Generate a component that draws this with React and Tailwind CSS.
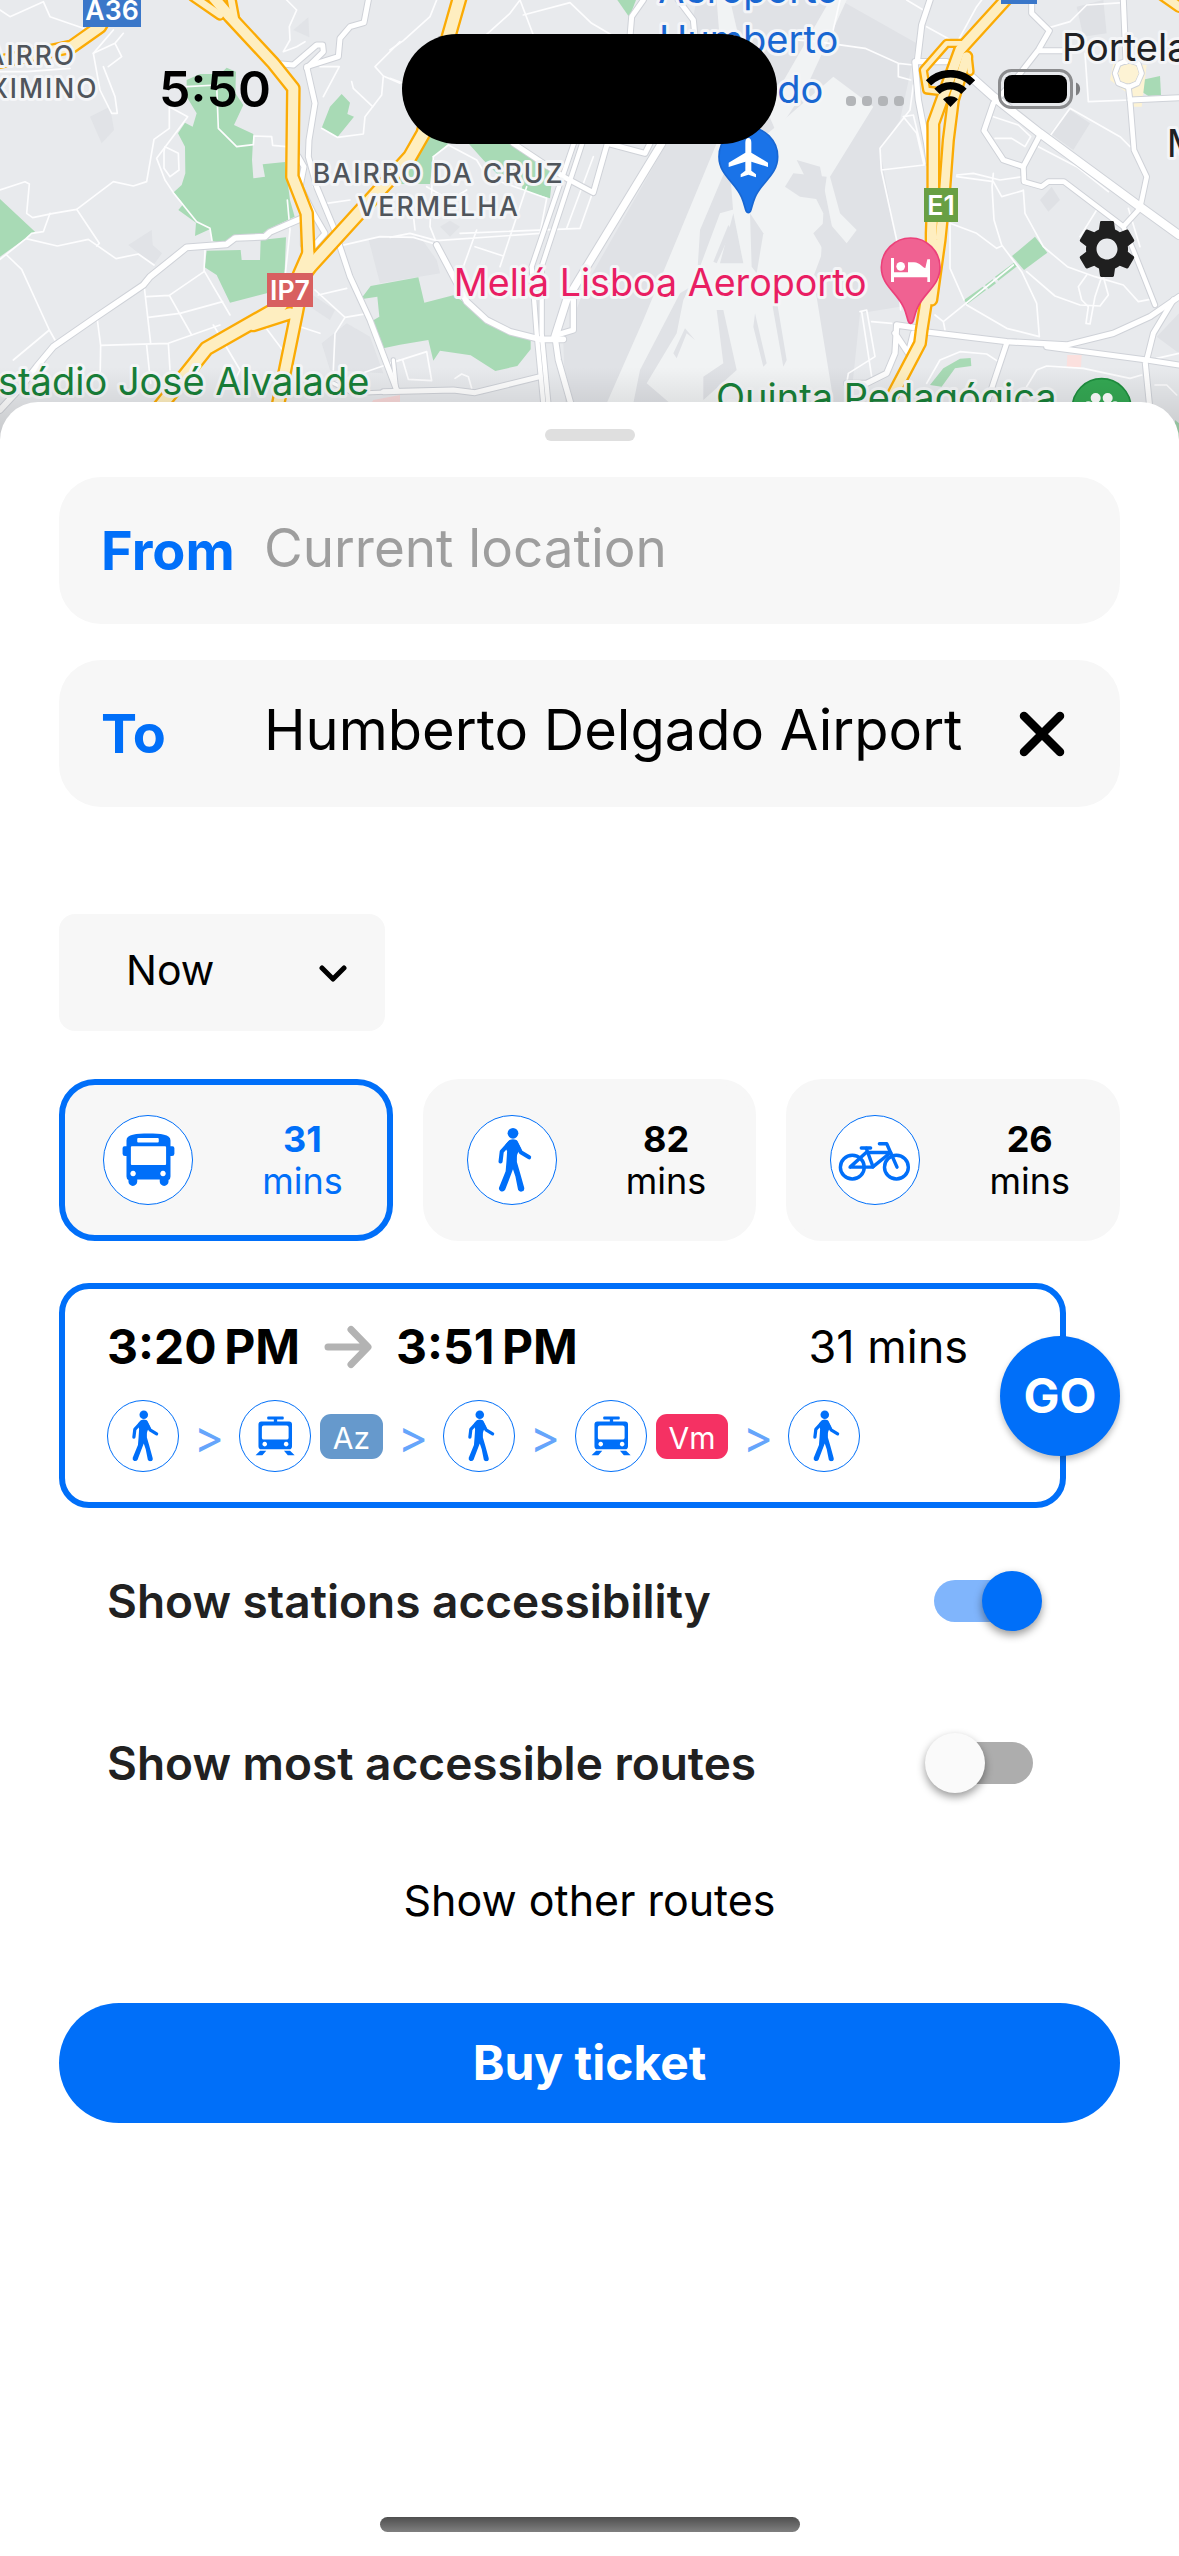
import React, { useState } from "react";
import { MdSettings } from "react-icons/md";

/* ---------- Map artwork ---------- */

const parks = [
  "M0 597 L105 695 L0 770Z",
  "M560 240 L600 222 L660 222 L680 203 L708 215 L706 280 L730 315 L702 375 L760 402 L756 480 L760 535 L795 530 L788 493 L855 486 L870 600 L884 650 L800 690 L775 712 L700 718 L680 735 L636 722 L631 687 L585 708 L588 668 L535 630 L550 612 L521 577 L545 555 L556 520 L555 440 L534 400 L555 368 L578 380 L590 340 L560 290Z",
  "M1025 282 L1050 308 L1042 342 L1062 350 L1012 412 L965 384 L990 320Z",
  "M620 752 L722 750 L725 780 L780 780 L782 720 L858 712 L852 860 L800 880 L690 908 L650 825 L614 802Z",
  "M1112 858 L1255 832 L1273 908 L1360 886 L1490 970 L1592 1020 L1592 1048 L1552 1098 L1486 1113 L1412 1066 L1320 1052 L1300 1082 L1285 1020 L1200 1034 L1150 1045 L1112 965 L1138 950 L1132 890 L1082 898Z",
  "M1280 395 L1345 432 L1300 470 L1290 552 L1170 552 L1220 480Z",
  "M1405 430 L1550 430 L1660 498 L1650 595 L1565 570 L1570 540 L1500 530 L1450 480Z",
  "M1852 0 L1908 0 L1888 52Z",
];

const parksEast = [
  "M765 710 L802 758 L732 810 L696 768Z",
  "M702 788 L712 798 L655 842 L645 830Z",
  "M638 838 L648 850 L625 867 L615 855Z",
  "M608 860 L618 870 L562 912 L552 900Z",
  "M450 1155 L490 1105 L540 1076 L572 1074 L574 1098 L525 1105 L485 1160Z",
  "M1085 240 L1140 228 L1143 285 L1105 288 L1085 275Z",
  "M1185 1260 L1197 1270 L1197 1320 L1185 1320Z",
];

const darkBlocks = [
  "M270 350 L330 320 L342 390 L305 430Z",
  "M385 735 L455 690 L458 735 L486 760 L460 795Z",
  "M880 90 L925 52 L928 112Z",
  "M1105 715 L1260 710 L1310 780 L1320 820 L1140 850Z",
  "M1040 970 L1110 1010 L1150 1120 L990 1110 L965 1030Z",
  "M1320 680 L1350 662 L1380 680 L1350 710Z",
  "M930 880 L1005 930 L990 960 L930 920Z",
];

const minorRoads = [
  "M0 570 L75 545 L88 552 L80 640 L98 653 L160 640 L230 628 L340 545 L400 558 L440 545 L462 418 L508 385 L508 320 L563 350 L545 375 L470 475 L495 540 L520 578 L590 665 L630 685 L636 722",
  "M20 765 L65 808 L148 990 L165 1020 M40 1080 L148 990 M0 778 L78 716 L95 700 L130 695 L150 640 M78 716 L172 738 L265 718 L348 776 L415 762 L462 795",
  "M230 628 L298 730 L290 738 M292 960 L302 1036 L505 1030 L660 975 M302 1036 L300 1150 M440 1036 L452 1150 M505 1030 L510 1110",
  "M433 862 L452 1030 M440 890 L508 886 L612 815 L615 752 M612 812 L690 945 M445 952 L540 940 L668 905 M508 886 L575 1005",
  "M0 30 L30 50 L130 5 L150 50 L250 85 M340 90 L280 160 L300 270 L335 340 L352 340 L345 290 L310 200",
  "M280 160 L345 130 L365 170 L325 200 M370 100 L345 130 M0 215 L80 215 L210 205",
  "M560 260 L650 255 L655 385 L710 440 L760 434 L762 408 L815 410 L818 436 L860 440",
  "M495 440 L535 460 L537 510 L510 530 L492 505 L492 455Z",
  "M860 0 L890 30 L868 80 L870 120 L850 155 M850 155 L890 140 L915 125",
  "M960 200 L1018 200 L970 290 M965 385 L1012 412 L1090 402 L1095 350 L1118 320 L1060 265 L1055 245",
  "M1118 320 L1145 285 L1150 228 L1200 250 M1150 228 L1125 200 L1200 125",
  "M862 600 L870 690 L855 830 M940 560 L980 610 L1050 600 M1010 740 L1140 710 L1240 712 L1315 735",
  "M945 870 L1035 952 L1105 940 M1035 952 L1005 1000 L1000 1110 M955 885 L1040 865 M640 975 L720 1110 L700 1150",
  "M1170 150 L1210 122 L1290 50 L1310 0 M1170 235 L1210 250 M1430 130 L1530 40 L1560 0 L1600 105 M1570 45 L1710 8 L1775 70 L1835 105",
  "M1300 470 L1345 435 L1430 480 L1460 530 L1640 595 L1620 700 L1310 722 M1380 700 L1740 685 L1830 430 M1430 690 L1390 800 M1500 800 L1580 560 M1425 740 L1510 768 M1700 685 L1780 470",
  "M1300 470 L1290 680 L1312 735 M1310 722 L1230 700 L1170 712 M1280 560 L1350 600 L1400 570 M1235 600 L1245 690",
  "M1170 1090 L1280 1055 L1295 1142 L1225 1138 L1208 1080 M1365 1135 L1385 1122 L1405 1130 L1415 1165",
  "M1000 1150 L1200 1080 M900 980 L960 1000 M780 960 L855 1060",
];

const minorRoadsEast = [
  "M0 115 L110 125 L255 145 L355 190 L400 195 M355 190 L355 230 L392 240 M400 255 L390 330 L300 445 L304 510 L432 495 M304 510 L350 720 L362 930",
  "M380 0 L430 30 M440 80 L530 130 L590 20 L605 0 M180 0 L155 110",
  "M640 350 L715 375 L752 410 L735 440 L695 415 L645 415 M640 520 L636 560 L642 660 L665 735 L725 815 L770 910 L778 1010 L680 985 L560 915",
  "M775 440 L890 500 L985 575 M870 325 L1020 410 L1050 440 M812 405 L870 325 M730 570 L735 640 L790 740 L862 800 L945 830 L1030 855 L1075 905 L1110 898",
  "M530 525 L580 520 L660 540 L730 530 M530 530 L640 545 L665 590 L728 572 M510 670 L590 700 L650 745 L665 738",
  "M510 670 L510 805 L552 900 M465 945 L490 965 L495 990 M490 965 L700 795 M740 815 L825 888 L900 915 L960 918 L985 885 L970 830",
  "M920 825 L895 860 L905 900 L925 920 L918 970 L930 972 L945 890 L965 830",
  "M240 935 L260 930 L285 1070 L205 1120 L200 1150 M275 965 L335 970 M245 935 L275 1130",
  "M800 85 L870 65 L920 15 L1030 8 M915 160 L925 305 L1050 300 M900 710 L950 630 M1045 625 L1080 740",
  "M400 345 L370 350 L410 400 L432 495 M400 345 L435 490",
  "M440 1150 L480 1080 L540 1055 L620 1062 L655 1085 M740 1160 L770 1110 L800 1098 L910 1105 L1050 1135 L1085 1125",
  "M1197 1060 L1130 1075 M1125 1155 L1160 1155 L1190 1185",
];

const majorRoads = [
  { d: "M0 1230 L60 1165 L110 1100 L160 1040 L290 950 L430 855 L450 830 L560 742 L680 733 L705 714 L795 710 L810 696 L905 655", w: 17 },
  { d: "M1105 0 L1092 68 L1050 80 L1020 115 L1015 170 L920 200 L945 310 L927 420 L925 470 L950 560 L1000 680 L1050 830 L1110 960 L1190 1170", w: 15 },
  { d: "M820 190 L880 195 L950 135 L968 135 L970 155 L920 205", w: 15 },
  { d: "M895 470 L912 500 L900 560 L940 640 L975 700 L940 740 L910 735 L910 650", w: 15 },
  { d: "M1310 735 L1400 905 L1460 960 L1530 995 L1620 1018 L1690 1018", w: 17 },
  { d: "M1725 420 L1595 800 L1610 1000 L1630 1210", w: 13 },
  { d: "M1750 420 L1625 800 L1625 1000 L1645 1210", w: 13 },
  { d: "M1985 430 L1760 800 L1700 900 L1665 1010", w: 22 },
  { d: "M1540 430 L1690 530 L1780 578 L1822 430 L1935 460 L1950 430", w: 15 },
  { d: "M1665 1010 L1675 1080 L1712 1210 M1670 1005 L1720 990 L1720 900", w: 16 },
  { d: "M1150 1175 L1360 1170 L1425 1178 L1620 1130", w: 15 },
  { d: "M1890 110 L1895 50 L1930 0 M2035 0 L2080 60 L2085 110", w: 15 },
  { d: "M1000 1150 L1060 1180 L1190 1175 L1180 1080", w: 10 },
];

const majorRoadsEast = [
  { d: "M450 0 L425 75 L412 185 L500 185 M405 185 L415 300 L440 430 L448 490", w: 16 },
  { d: "M550 210 L640 290 L780 400 L1080 620 L1197 705", w: 24 },
  { d: "M755 0 L755 40 L808 92 L775 150 L705 240 L640 310 L612 392 L670 480 L730 500 L780 405 M775 152 L850 152", w: 15 },
  { d: "M730 500 L732 545 L785 560 L805 545 L852 545 L1030 680 L1080 625 L1100 530 L1062 450 L1050 300 L1045 260", w: 14 },
  { d: "M1030 0 L1038 185 M1050 300 L1197 293", w: 15 },
  { d: "M1045 180 L1075 190 L1085 220 L1072 250 L1045 262 L1015 250 L1005 220 L1015 192Z", w: 13 },
  { d: "M1030 680 L1060 750 L1125 915", w: 13 },
  { d: "M430 995 L680 1025 L860 1035 L1000 1000 L1110 950 L1197 890", w: 16 },
  { d: "M800 1040 L1100 1080 L1197 1095 M1100 1080 L1120 1000 L1180 900 M1095 1080 L1108 1210", w: 15 },
  { d: "M680 1030 L640 1150 L620 1210", w: 15 },
  { d: "M420 985 L350 975 L345 1060 L320 1120 L260 1150 L200 1150 M345 1000 L385 1060 L400 1000", w: 16 },
];

const highways = [
  { d: "M0 185 L215 140 L300 80 L330 30", w: 30 },
  { d: "M630 -20 L690 50 L820 190 L880 265 L877 530 L920 640 L925 760 L890 840", w: 30 },
  { d: "M580 -10 L660 45 M690 -20 L705 60", w: 20 },
  { d: "M1380 -10 L1340 130 L1270 400 L1230 470 L930 800 L840 920 L620 1045 L480 1220", w: 34 },
  { d: "M870 940 L760 975 M925 760 L890 940 L835 1210", w: 30 },
];

const highwaysEast = [
  { d: "M690 -15 L540 150 L500 260 L460 370 L460 560 L455 700 L455 800 L425 990 L420 1030 L320 1220", w: 28 },
  { d: "M560 170 L520 300 L505 420 L490 620 L480 720 L455 900", w: 26 },
  { d: "M550 130 L500 130 L430 210 L440 270 L480 275 M565 170 L570 215", w: 14 },
  { d: "M1140 -20 L1197 20", w: 24 },
];

function Roads({ list, casing, fill, edge }) {
  return (
    <>
      {list.map((r, i) => (
        <path key={"c" + i} d={r.d} stroke={casing} strokeWidth={r.w + edge} />
      ))}
      {list.map((r, i) => (
        <path key={"f" + i} d={r.d} stroke={fill} strokeWidth={r.w} />
      ))}
    </>
  );
}

function MapLabel({ x, y, size, color, anchor = "start", weight = 400, spacing = 0, children }) {
  return (
    <text
      x={x}
      y={y}
      fontSize={size}
      fill={color}
      textAnchor={anchor}
      fontWeight={weight}
      letterSpacing={spacing}
      stroke="#f4f5f7"
      strokeWidth="18"
      strokeLinejoin="round"
      paintOrder="stroke"
    >
      {children}
    </text>
  );
}

function RoadShield({ x, y, w, h, color, label }) {
  return (
    <g>
      <rect x={x} y={y} width={w} height={h} fill={color} />
      <text x={x + w / 2} y={y + h - 22} fontSize="80" fontWeight="600" fill="#fff" textAnchor="middle">
        {label}
      </text>
    </g>
  );
}

function CityMap() {
  return (
    <svg
      className="col-start-1 row-start-1 h-full w-full"
      viewBox="0 0 3537 1320"
      preserveAspectRatio="xMidYMid slice"
      fontFamily="Inter, sans-serif"
      role="img"
      aria-label="Map of Lisbon around the airport"
    >
      <defs>
        <linearGradient id="shade" x1="0" y1="0" x2="0" y2="1">
          <stop offset="0" stopColor="#000" stopOpacity="0" />
          <stop offset="1" stopColor="#000" stopOpacity="0.15" />
        </linearGradient>
      </defs>
      <rect width="3537" height="1320" fill="#e8eaed" />
      {/* airport grounds and runways */}
      <path d="M2090 0 L2520 0 L2750 130 L2700 360 L2640 450 L2690 720 L2700 920 L2580 940 L2540 1320 L1700 1320 L1690 1030 L1760 850 L2000 430Z" fill="#e0e2e6" />
      <g fill="#f1f3f4">
        <path d="M2150 430 L2210 430 L2100 690 L2090 850 L2040 880 L1920 1110 L1900 1210 L1820 1210 L1930 960Z" />
        <path d="M2230 460 L2340 370 L2500 230 L2620 320 L2490 530 L2520 640 L2570 690 L2540 730 L2480 660 L2440 700 L2470 750 L2440 830 L2500 1200 L2010 1210 L1940 1150 L2030 1000 L2050 900 L2100 800 L2160 640 L2230 620Z" />
        <path d="M2490 0 L2540 0 L2420 260 L2330 400 L2300 330Z" />
        <path d="M2150 0 L2190 0 L2260 300 L2250 640 L2200 640Z" />
      </g>
      <g fill="#e0e2e6">
        <path d="M2185 675 L2195 690 L2150 790 L2140 785Z" />
        <path d="M2200 640 L2230 790 L2160 790Z" />
        <path d="M2250 640 L2290 700 L2270 820 L2255 800Z" />
        <path d="M2020 1060 L2055 985 L2085 1020 L2060 1000 L2030 1075Z" />
        <path d="M2110 1130 L2170 1090 L2150 930 L2170 930 L2210 1110 L2110 1200Z" />
        <path d="M2265 940 L2300 1090 L2290 1100 L2260 980Z" />
        <path d="M2330 900 L2360 1080 L2350 1100 L2318 920Z" />
        <path d="M2390 480 L2460 500 L2500 700 L2460 830 L2470 640Z" />
        <path d="M2355 560 L2380 520 L2480 530 L2470 600 L2400 590Z" />
      </g>
      <g fill="#dfe1e5">
        {darkBlocks.map((d) => (
          <path key={d} d={d} opacity="0.8" />
        ))}
        <path d="M3120 600 L3155 560 L3180 600 L3145 635Z" />
        <path d="M3150 400 L3210 330 L3270 370 L3220 450Z" />
        <path d="M3230 20 L3310 0 L3320 100 L3250 110Z" />
        <path d="M3470 1010 L3537 940 L3537 1060Z" />
      </g>
      <g fill="#a8dab5">
        {parks.map((d) => (
          <path key={d} d={d} />
        ))}
      </g>
      <path d="M1120 1200 L1200 1185 L1200 1215 L1110 1215Z" fill="#f8d8d8" />
      <g fill="none" strokeLinejoin="round" strokeLinecap="round">
        <g stroke="#fdfdfe" strokeWidth="5">
          {minorRoads.map((d) => (
            <path key={d} d={d} />
          ))}
        </g>
        <Roads list={majorRoads} casing="#cfd2d8" fill="#fff" edge={6} />
        <g transform="translate(2340 0)">
          <g fill="#a8dab5">
            {parksEast.map((d) => (
              <path key={d} d={d} />
            ))}
            <path d="M862 1065 L905 1065 L903 1102 L860 1100Z" fill="#fbe0de" />
            <path d="M1000 190 L1100 195 L1085 320 L1060 320 L1050 285 L990 240Z" fill="#fdf3d4" />
          </g>
          <g stroke="#fdfdfe" strokeWidth="5">
            {minorRoadsEast.map((d) => (
              <path key={d} d={d} />
            ))}
          </g>
          <Roads list={majorRoadsEast} casing="#cfd2d8" fill="#fff" edge={6} />
          <path d="M1045 192 L1070 200 L1076 220 L1066 242 L1045 250 L1022 242 L1015 220 L1024 200Z" fill="#fdf3d4" />
          <Roads list={highwaysEast} casing="#fbab05" fill="#feeec0" edge={14} />
        </g>
        <Roads list={highways} casing="#fbab05" fill="#feeec0" edge={14} />
      </g>

      <MapLabel x={228} y={195} size={79} color="#50555b" anchor="end" weight={500} spacing={6}>BAIRRO</MapLabel>
      <MapLabel x={295} y={293} size={79} color="#50555b" anchor="end" weight={500} spacing={6}>MAXIMINO</MapLabel>
      <MapLabel x={1316} y={550} size={80} color="#50555b" anchor="middle" weight={500} spacing={6}>BAIRRO DA CRUZ</MapLabel>
      <MapLabel x={1316} y={647} size={80} color="#50555b" anchor="middle" weight={500} spacing={6}>VERMELHA</MapLabel>
      <MapLabel x={1108} y={1184} size={114} color="#188038" anchor="end">Estádio José Alvalade</MapLabel>
      <MapLabel x={2600} y={888} size={113} color="#e91e63" anchor="end">Meliá Lisboa Aeroporto</MapLabel>
      <MapLabel x={3170} y={1234} size={114} color="#188038" anchor="end">Quinta Pedagógica</MapLabel>
      <MapLabel x={2246} y={10} size={114} color="#1967d2" anchor="middle">Aeroporto</MapLabel>
      <MapLabel x={2246} y={158} size={114} color="#1967d2" anchor="middle">Humberto</MapLabel>
      <MapLabel x={2246} y={308} size={114} color="#1967d2" anchor="middle">Delgado</MapLabel>
      <MapLabel x={3186} y={182} size={114} color="#202124">Portela</MapLabel>
      <MapLabel x={3500} y={470} size={114} color="#202124">Moscavide</MapLabel>

      <RoadShield x={249} y={-20} w={174} h={101} color="#3a77c9" label="A36" />
      <RoadShield x={801} y={819} w={138} h={102} color="#d86060" label="IP7" />
      <RoadShield x={2772} y={564} w={102} h={102} color="#689f43" label="E1" />
      <rect x="3003" y="-40" width="108" height="52" fill="#3a77c9" />

      {/* airport pin */}
      <g transform="translate(2245 470)">
        <path d="M0 168 C-10 168 -8 150 -20 122 C-40 75 -88 55 -88 0 A88 88 0 0 1 88 0 C88 55 40 75 20 122 C8 150 10 168 0 168Z" fill="#1a73e8" stroke="#1967d2" strokeWidth="5" />
        <path d="M0 -56 C6 -56 9 -50 9 -42 V-12 L59 18 V31 L9 15 V42 L23 53 V62 L0 54 L-23 62 V53 L-9 42 V15 L-59 31 V18 L-9 -12 V-42 C-9 -50 -6 -56 0 -56Z" fill="#fff" />
      </g>
      {/* hotel pin */}
      <g transform="translate(2732 802)">
        <path d="M0 168 C-10 168 -8 150 -20 122 C-40 75 -88 55 -88 0 A88 88 0 0 1 88 0 C88 55 40 75 20 122 C8 150 10 168 0 168Z" fill="#f06292" stroke="#ec407a" strokeWidth="5" />
        <path d="M-59 -28 H-50 V15 H-8 V-15 H10 C28 -15 35 2 44 2 L50 -24 L58 -24 V44 H50 V30 H-50 V44 H-59Z" fill="#fff" />
        <circle cx="-30" cy="-3" r="13" fill="#fff" />
      </g>
      {/* park pin */}
      <g transform="translate(3305 1224)">
        <circle r="88" fill="#34a853" stroke="#1e8e3e" strokeWidth="5" />
        <g fill="#fff">
          <circle cx="-18" cy="-30" r="15" />
          <circle cx="18" cy="-30" r="15" />
          <circle cx="-40" cy="-8" r="12" />
          <circle cx="40" cy="-8" r="12" />
          <ellipse cy="12" rx="26" ry="22" />
        </g>
      </g>
      <rect y="1100" width="3537" height="220" fill="url(#shade)" />
    </svg>
  );
}

/* ---------- Status bar ---------- */

function StatusBar() {
  return (
    <div className="col-start-1 row-start-1 mt-[34px] grid h-[110px] grid-cols-[1fr_375px_1fr] self-start">
      <time className="self-center justify-self-center pl-[28px] text-[50px] leading-[60px] font-semibold text-black">5:50</time>
      <div className="rounded-full bg-black" />
      <div className="flex items-center pl-[69px]">
        <div className="mt-6 flex gap-[6px]">
          {[0, 1, 2, 3].map((i) => (
            <span key={i} className="size-[10px] rounded-[4px] bg-[#b3b5b8]" />
          ))}
        </div>
        <svg className="ml-[21px] h-[38px] w-[51px]" viewBox="0 0 51 38" aria-label="Wi-Fi">
          <g fill="none" stroke="#000" strokeWidth="7.5">
            <path d="M3.5 12.8 A31 31 0 0 1 47.500 12.800" />
            <path d="M12 21.300 A19 19 0 0 1 39 21.300" />
          </g>
          <path d="M25.500 37 L18 29.300 A10.500 10.500 0 0 1 33 29.300Z" />
        </svg>
        <svg className="ml-[22px] h-[40px] w-[84px]" viewBox="0 0 84 40" aria-label="Battery full">
          <rect x="1.500" y="1.500" width="72" height="37" rx="12" fill="none" stroke="#8b8c8e" strokeWidth="3" />
          <rect x="6" y="6" width="63" height="28" rx="8" />
          <path d="M78 13.500 C83.500 15.500 83.500 24.500 78 26.500Z" fill="#7d7e80" />
        </svg>
      </div>
    </div>
  );
}

/* ---------- Transport icons ---------- */

function BusGlyph() {
  return (
    <svg viewBox="0 0 90 90" className="size-full" aria-hidden="true" fill="currentColor">
      <path
        fillRule="evenodd"
        d="M23 25 C23 19 33 18 45.500 18 C58 18 68 19 68 25 V31 H70 Q72 31 72 33 V38.500 Q72 41 69.500 41 H68 V62 Q68 65 66 65.500 V67 A4.500 4.500 0 0 1 57 67 V65 H34 V67 A4.500 4.500 0 0 1 25 67 V65.500 Q23 65 23 62 V41 H21.500 Q19 41 19 38.500 V33 Q19 31 21 31 H23Z M35 22.500 Q34 22.500 34 23.500 V26 Q34 27 35 27 H55 Q56 27 56 26 V23.500 Q56 22.500 55 22.500Z M28.500 31 Q27.500 31 27.500 32 V49 Q27.500 50 28.500 50 H62.500 Q63.500 50 63.500 49 V32 Q63.500 31 62.500 31Z M29.700 56 A2.800 2.800 0 1 0 29.800 56Z M60.300 56 A2.800 2.800 0 1 0 60.400 56Z"
      />
    </svg>
  );
}

function WalkGlyph() {
  return (
    <svg viewBox="0 0 90 90" className="size-full" aria-hidden="true">
      <circle cx="46" cy="17.700" r="5.500" fill="currentColor" />
      <g fill="none" stroke="currentColor" strokeLinecap="round" strokeLinejoin="round">
        <path d="M43 27 L34.500 36.500 L33.300 46.500" strokeWidth="4.200" />
        <path d="M49 27 L54 37 L62.500 42.300" strokeWidth="4.200" />
      </g>
      <path
        fill="currentColor"
        d="M42.500 24.600 Q46 23.200 49.500 24.600 L54.500 34 Q50 37 50 42 L50 47 L53.200 58 L57.500 73.500 Q58 76.800 55 77.300 Q52 77.700 51.200 75.500 L48.500 62 L46 54.500 L43 62.500 L38 75.500 Q36.500 78 33.500 77 Q31 75.500 31.800 73 L38.500 56.500 L39.300 47 L40 36 Q38 33 38.500 29Z"
      />
    </svg>
  );
}

function BikeGlyph() {
  return (
    <svg viewBox="0 0 90 90" className="size-full" aria-hidden="true">
      <g fill="none" stroke="currentColor" strokeWidth="3.500" strokeLinecap="round" strokeLinejoin="round">
        <circle cx="21.800" cy="52.300" r="12.200" />
        <circle cx="66.900" cy="52.300" r="12.200" />
        <path d="M19.500 52.300 H42.500 L61 37.300 H36 L19.500 52.300" />
        <path d="M36 33 L43 52" />
        <path d="M31 32.800 H40.500" />
        <path d="M49.500 28.400 H57 L67.500 52.300" />
      </g>
    </svg>
  );
}

function TramGlyph() {
  return (
    <svg viewBox="0 0 72 72" className="size-full" aria-hidden="true" fill="currentColor">
      <rect x="28" y="16" width="17" height="3" rx="1" />
      <rect x="34.800" y="18" width="3.400" height="4" />
      <path
        fillRule="evenodd"
        d="M22 21 H50.500 Q53.500 21 53.500 24 V46.500 Q53.500 49.700 50.500 49.700 H22 Q19 49.700 19 46.500 V24 Q19 21 22 21Z M24.500 25.300 Q22.500 25.300 22.500 27.300 V37.700 Q22.500 39.700 24.500 39.700 H48 Q50 39.700 50 37.700 V27.300 Q50 25.300 48 25.300Z M25.400 41.900 A2.400 2.400 0 1 0 25.500 41.900Z M47.400 41.900 A2.400 2.400 0 1 0 47.500 41.900Z"
      />
      <path d="M20.700 51.200 H27 L23 55.800 H16Z M45.200 51.200 H51.500 L56.200 55.800 H49.200Z" />
    </svg>
  );
}

/* ---------- Sheet ---------- */

function SearchField({ id, label, placeholder, defaultValue, clearable }) {
  const [value, setValue] = useState(defaultValue || "");
  return (
    <div className="flex h-[147px] items-center rounded-[42px] bg-[#f7f7f7] px-[42px]">
      <label htmlFor={id} className="w-[163px] shrink-0 text-[54px] leading-[64px] font-bold text-[#006ff9]">
        {label}
      </label>
      <input
        id={id}
        type="text"
        value={value}
        placeholder={placeholder}
        onChange={(e) => setValue(e.target.value)}
        className="h-[80px] min-w-0 flex-1 bg-transparent pb-2 text-[56px] text-black outline-none placeholder:text-[53px] placeholder:text-[#9e9e9e]"
      />
      {clearable && (
        <button type="button" aria-label="Clear destination" onClick={() => setValue("")} className="ml-[40px] flex size-[72px] items-center justify-center">
          <svg viewBox="0 0 46 46" className="size-[46px]" aria-hidden="true">
            <path d="M5 5 L41 41 M41 5 L5 41" stroke="#000" strokeWidth="8.500" strokeLinecap="round" />
          </svg>
        </button>
      )}
    </div>
  );
}

const modes = [
  { name: "Public transport", mins: 31, Glyph: BusGlyph },
  { name: "Walk", mins: 82, Glyph: WalkGlyph },
  { name: "Bicycle", mins: 26, Glyph: BikeGlyph },
];

function ModeCard({ mode, selected, onSelect }) {
  const { Glyph } = mode;
  return (
    <button
      type="button"
      aria-label={mode.name + ", " + mode.mins + " mins"}
      aria-pressed={selected}
      onClick={onSelect}
      className={
        "flex h-[162px] items-center justify-between rounded-[36px] border-6 bg-[#f7f7f7] pr-[44px] pl-[38px] " +
        (selected ? "border-[#006ff9] text-[#006ff9]" : "border-[#f7f7f7] text-black")
      }
    >
      <span className="size-[90px] rounded-full border border-[#006ff9] bg-white text-[#006ff9]">
        <Glyph />
      </span>
      <span className="flex flex-col items-center text-[36px] leading-[42px]">
        <span className="font-bold">{mode.mins}</span>
        <span>mins</span>
      </span>
    </button>
  );
}

const legs = [
  { kind: "walk" },
  { kind: "tram", line: "Az", tint: "w-[63px] bg-[#6699cc]" },
  { kind: "walk" },
  { kind: "tram", line: "Vm", tint: "w-[72px] bg-[#f53163]" },
  { kind: "walk" },
];

function RouteCard() {
  return (
    <div className="relative mt-[42px] pr-[54px]">
      <article className="flex h-[225px] flex-col rounded-[30px] border-6 border-[#006ff9] bg-white pt-[28px] pr-[92px] pl-[42px]">
        <div className="flex h-[60px] items-center">
          <span className="text-[48px] font-bold text-black">{"3:20\u2009PM"}</span>
          <svg viewBox="0 0 48 44" className="mx-[24px] h-[44px] w-[48px]" aria-label="to">
            <path d="M4 22 H43 M27 4.500 L44 22 L27 39.500" fill="none" stroke="#b3b3b3" strokeWidth="7" strokeLinecap="round" strokeLinejoin="round" />
          </svg>
          <span className="text-[48px] font-bold text-black">{"3:51\u2009PM"}</span>
          <span className="ml-auto text-[45px] text-black">31 mins</span>
        </div>
        <ol className="mt-[23px] flex h-[72px] items-center">
          {legs.map((leg, i) => (
            <li key={i} className="flex items-center">
              {i > 0 && <span className="w-[60px] text-center text-[46px] leading-[48px] text-[#66a5fb]">&gt;</span>}
              <span className="size-[72px] rounded-full border border-[#006ff9] text-[#006ff9]">
                {leg.kind === "walk" ? <WalkGlyph /> : <TramGlyph />}
              </span>
              {leg.line && (
                <span className={"ml-[9px] flex h-[45px] items-center justify-center rounded-[11px] pt-1 text-[30px] text-white " + leg.tint}>
                  {leg.line}
                </span>
              )}
            </li>
          ))}
        </ol>
      </article>
      <button type="button" className="absolute top-1/2 right-0 flex size-[120px] -translate-y-1/2 items-center justify-center rounded-full bg-[#006ff9] text-[48px] font-bold text-white shadow-[0_4px_6px_rgba(0,0,0,0.25)]">
        GO
      </button>
    </div>
  );
}

function SwitchRow({ label, defaultChecked }) {
  return (
    <label className="flex h-[162px] items-center justify-between pr-[87px] pl-[48px] text-[46px] font-semibold text-[#212121]">
      {label}
      <input
        type="checkbox"
        role="switch"
        defaultChecked={defaultChecked}
        className="relative h-[42px] w-[99px] shrink-0 appearance-none rounded-full bg-[#adadad] before:absolute before:-top-[9px] before:-left-[9px] before:size-[60px] before:rounded-full before:bg-[#fafafa] before:shadow-[0_4px_9px_rgba(0,0,0,0.4)] before:content-[''] checked:bg-[#80b5fc] checked:before:left-[48px] checked:before:bg-[#006ff9]"
      />
    </label>
  );
}

export default function App() {
  const [mode, setMode] = useState(0);
  return (
    <div className="flex min-h-screen flex-col bg-white font-['Inter',sans-serif]">
      <header className="grid h-[440px] overflow-hidden">
        <CityMap />
        <StatusBar />
        <button type="button" aria-label="Settings" className="z-10 col-start-1 row-start-1 mt-[214px] mr-[37px] size-[70px] self-start justify-self-end text-[#1f1f1f]">
          <MdSettings className="size-full" />
        </button>
      </header>

      <main className="relative z-10 -mt-[38px] flex flex-1 flex-col rounded-t-[38px] bg-white px-[59px] pt-[27px] pb-6">
        <div className="h-[12px] w-[90px] self-center rounded-full bg-[#dfdfdf]" />

        <form className="mt-[36px] flex flex-col gap-[36px]">
          <SearchField id="from" label="From" placeholder="Current location" />
          <SearchField id="to" label="To" defaultValue="Humberto Delgado Airport" clearable />
        </form>

        <div className="relative mt-[107px] w-[326px]">
          <select aria-label="Departure time" className="h-[117px] w-full appearance-none rounded-[16px] bg-[#f7f7f7] pb-1 pl-[67px] text-[41px] text-black">
            <option>Now</option>
          </select>
          <svg viewBox="0 0 28 18" className="pointer-events-none absolute top-[51px] right-[38px] h-[18px] w-[28px]" aria-hidden="true">
            <path d="M3 3 L14 14 L25 3" fill="none" stroke="#000" strokeWidth="5" strokeLinecap="round" strokeLinejoin="round" />
          </svg>
        </div>

        <div className="mt-12 grid grid-cols-3 gap-[30px]">
          {modes.map((m, i) => (
            <ModeCard key={m.name} mode={m} selected={i === mode} onSelect={() => setMode(i)} />
          ))}
        </div>

        <RouteCard />

        <div className="mt-3">
          <SwitchRow label="Show stations accessibility" defaultChecked />
          <SwitchRow label="Show most accessible routes" />
        </div>

        <button type="button" className="h-[112px] self-center px-6 text-[43px] text-black">
          Show other routes
        </button>
        <button type="button" className="mt-[47px] h-[120px] rounded-full bg-[#006ff9] text-[48px] font-bold text-white">
          Buy ticket
        </button>

        <div className="mt-auto h-[15px] w-[420px] self-center rounded-full bg-linear-to-b from-[#4f4f4f] to-[#808080]" />
      </main>
    </div>
  );
}
